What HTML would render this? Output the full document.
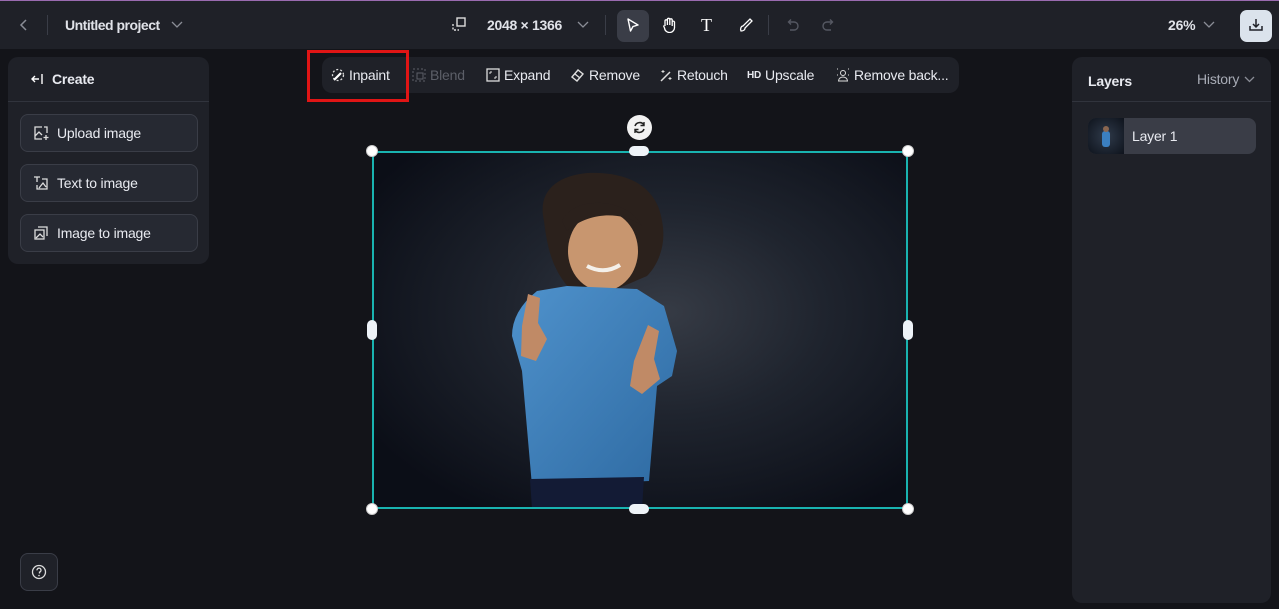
<!DOCTYPE html>
<html><head><meta charset="utf-8"><style>
*{box-sizing:border-box;margin:0;padding:0}
body{width:1279px;height:609px;background:#131419;font-family:"Liberation Sans",sans-serif;color:#e8eaf0;position:relative;overflow:hidden;font-size:14px;letter-spacing:-0.2px}
.top{position:absolute;left:0;top:0;width:1279px;height:49px;background:#1f2128;border-top:1px solid #9a6bb0}
.abs{position:absolute}
.panel{position:absolute;background:#1f2128;border-radius:10px}
.btn{position:absolute;left:12px;width:178px;height:38px;border:1px solid #3a3d47;border-radius:8px;background:#262932;display:flex;align-items:center;padding-left:12px;gap:8px;font-size:14px}
.tool{display:flex;align-items:center;gap:4px;font-size:14px;color:#e8eaf0}
svg{display:block}
</style></head><body>
<div class="top">
 <svg class="abs" style="left:18px;top:17px" width="12" height="14" viewBox="0 0 12 14"><path d="M8 2 L3 7 L8 12" stroke="#8a8d96" stroke-width="1.5" fill="none"/></svg>
 <div class="abs" style="left:47px;top:14px;width:1px;height:20px;background:#3a3d47"></div>
 <div class="abs" style="left:65px;top:16px;font-size:14px;font-weight:bold;color:#e0e2e8;letter-spacing:-0.5px">Untitled project</div>
 <svg class="abs" style="left:171px;top:19px" width="12" height="10"><path d="M1 2 L6 7 L11 2" stroke="#8a8d96" stroke-width="1.3" fill="none"/></svg>
 <svg class="abs" style="left:452px;top:16px" width="14" height="14"><rect x="5" y="1" width="8" height="8" stroke="#ddd" fill="none" stroke-width="1.4"/><path d="M1 7 V13 H7" stroke="#ddd" fill="none" stroke-dasharray="2 1.5" stroke-width="1.4"/></svg>
 <div class="abs" style="left:487px;top:16px;font-weight:bold;color:#e0e2e8;letter-spacing:-0.3px">2048 × 1366</div>
 <svg class="abs" style="left:577px;top:19px" width="12" height="10"><path d="M1 2 L6 7 L11 2" stroke="#8a8d96" stroke-width="1.3" fill="none"/></svg>
 <div class="abs" style="left:605px;top:14px;width:1px;height:20px;background:#3a3d47"></div>
 <div class="abs" style="left:617px;top:9px;width:32px;height:32px;border-radius:7px;background:#3a3d47"></div>
 <svg class="abs" style="left:626px;top:17px" width="14" height="15"><path d="M2 1 L12 7 L7 8.5 L4.5 13 Z" stroke="#fff" fill="none" stroke-width="1.4" stroke-linejoin="round"/></svg>
 <svg class="abs" style="left:662px;top:16px" width="14" height="16"><path d="M3 9 V4 a1.2 1.2 0 0 1 2.4 0 V8 V2.5 a1.2 1.2 0 0 1 2.4 0 V8 V3 a1.2 1.2 0 0 1 2.4 0 V9 V5 a1.2 1.2 0 0 1 2.3 0 V10 a5 5 0 0 1 -10 1 L1.5 8.5" stroke="#fff" fill="none" stroke-width="1.3"/></svg>
 <div class="abs" style="left:701px;top:14px;font-family:'Liberation Serif',serif;font-size:18px;color:#fff">T</div>
 <svg class="abs" style="left:738px;top:16px" width="16" height="16"><path d="M3 14 C2 12 3 9 5 9 L12 2 L14 4 L7 11 C7 13 5 14 3 14Z" stroke="#fff" fill="none" stroke-width="1.3"/></svg>
 <div class="abs" style="left:768px;top:14px;width:1px;height:20px;background:#3a3d47"></div>
 <svg class="abs" style="left:786px;top:17px" width="14" height="14"><path d="M3 4 H8 a4 4 0 0 1 0 8 H4 M5 1.5 L2.5 4 L5 6.5" stroke="#555862" fill="none" stroke-width="1.4"/></svg>
 <svg class="abs" style="left:821px;top:17px" width="14" height="14"><path d="M11 4 H6 a4 4 0 0 0 0 8 H10 M9 1.5 L11.5 4 L9 6.5" stroke="#555862" fill="none" stroke-width="1.4"/></svg>
 <div class="abs" style="left:1168px;top:16px;font-weight:bold;color:#e0e2e8">26%</div>
 <svg class="abs" style="left:1203px;top:19px" width="12" height="10"><path d="M1 2 L6 7 L11 2" stroke="#8a8d96" stroke-width="1.3" fill="none"/></svg>
 <div class="abs" style="left:1240px;top:9px;width:32px;height:32px;border-radius:7px;background:#dbe3ec"></div>
 <svg class="abs" style="left:1248px;top:16px" width="16" height="16"><path d="M8 2 V10 M5 7 L8 10 L11 7 M2 9 V13 H14 V9" stroke="#1f2128" fill="none" stroke-width="1.5"/></svg>
</div>

<div class="panel" style="left:8px;top:57px;width:201px;height:207px">
 <svg class="abs" style="left:22px;top:15px" width="14" height="14"><path d="M9 7 H2 M5 4 L2 7 L5 10 M12 2 V12" stroke="#fff" fill="none" stroke-width="1.4"/></svg>
 <div class="abs" style="left:44px;top:14px;font-weight:bold;font-size:14px">Create</div>
 <div class="abs" style="left:0;top:44px;width:201px;height:1px;background:#31343d"></div>
 <div class="btn" style="top:57px"><svg width="16" height="16"><path d="M9 2 H2 V14 H9 M2 11 L6 7 L9 10 M11 2 H14 V8" stroke="#ddd" fill="none" stroke-width="1.3"/><path d="M13 10 V15 M10.5 12.5 H15.5" stroke="#ddd" stroke-width="1.3"/></svg>Upload image</div>
 <div class="btn" style="top:107px"><svg width="16" height="16"><path d="M1 2 H7 M4 2 V7 M9 4 H14 V14 H4 V10 M6 13 L10 8 L13 12" stroke="#ddd" fill="none" stroke-width="1.3"/></svg>Text to image</div>
 <div class="btn" style="top:157px"><svg width="16" height="16"><rect x="2" y="5" width="9" height="9" stroke="#ddd" fill="none" stroke-width="1.3"/><path d="M5 2 H14 V11 M3 13 L7 9 L10 12" stroke="#ddd" fill="none" stroke-width="1.3"/></svg>Image to image</div>
</div>

<div class="abs" style="left:20px;top:553px;width:38px;height:38px;border:1px solid #3a3d47;border-radius:8px;background:#1f2128"></div>
<svg class="abs" style="left:31px;top:564px" width="16" height="16"><circle cx="8" cy="8" r="6.5" stroke="#ddd" fill="none" stroke-width="1.3"/><path d="M6 6.3 a2 2 0 1 1 2.5 1.8 V9.5" stroke="#ddd" fill="none" stroke-width="1.3"/><circle cx="8" cy="11.5" r=".8" fill="#ddd"/></svg>

<div class="panel" style="left:322px;top:57px;width:637px;height:36px"></div>
<div class="abs" style="left:307px;top:50px;width:102px;height:52px;border:3px solid #e01515"></div>
<div class="abs tool" style="left:331px;top:67px"><svg width="14" height="14"><circle cx="7" cy="7" r="5.5" stroke="#ddd" fill="none" stroke-dasharray="2 2" stroke-width="1.3"/><path d="M3 12 L10 5" stroke="#fff" stroke-width="2.2"/></svg>Inpaint</div>
<div class="abs tool" style="left:412px;top:67px;color:#5c5f68"><svg width="14" height="14"><rect x="1" y="1" width="12" height="12" stroke="#5c5f68" fill="none" stroke-dasharray="2 2"/><rect x="5" y="5" width="6" height="6" stroke="#5c5f68" fill="none"/></svg>Blend</div>
<div class="abs tool" style="left:486px;top:67px"><svg width="14" height="14"><rect x="1" y="1" width="12" height="12" stroke="#ddd" fill="none" stroke-width="1.3"/><path d="M4 4 h2 M4 4 v2 M10 10 h-2 M10 10 v-2" stroke="#ddd"/></svg>Expand</div>
<div class="abs tool" style="left:570px;top:67px"><svg width="15" height="14"><path d="M2 9 L8 2 L13 6 L7 13 Z M5 6 L10 10" stroke="#ddd" fill="none" stroke-width="1.4"/></svg>Remove</div>
<div class="abs tool" style="left:659px;top:67px"><svg width="14" height="14"><path d="M2 13 L11 4" stroke="#ddd" stroke-width="1.5"/><path d="M4 2 v3 M2.5 3.5 h3 M11 9 v3 M9.5 10.5 h3" stroke="#ddd"/></svg>Retouch</div>
<div class="abs tool" style="left:747px;top:67px"><span style="font-size:10px;font-weight:bold">HD</span>Upscale</div>
<div class="abs tool" style="left:836px;top:67px"><svg width="14" height="14"><circle cx="7" cy="5" r="2.5" stroke="#ddd" fill="none"/><path d="M2.5 13 a4.5 4 0 0 1 9 0Z" stroke="#ddd" fill="none"/><path d="M1 1h1M12 1h1M1 7h1M12 7h1" stroke="#ddd"/></svg>Remove back...</div>

<!-- image -->
<svg class="abs" style="left:372px;top:151px" width="536" height="358" viewBox="0 0 536 358">
 <defs>
  <radialGradient id="bg" cx="0.55" cy="0.45" r="0.65"><stop offset="0" stop-color="#363b45"/><stop offset="0.45" stop-color="#1f242e"/><stop offset="1" stop-color="#0b0e17"/></radialGradient>
  <linearGradient id="sh" x1="0" y1="0" x2="1" y2="1"><stop offset="0" stop-color="#4f92cc"/><stop offset="1" stop-color="#2e6aa2"/></linearGradient>
 </defs>
 <rect width="536" height="358" fill="url(#bg)"/>
 <path d="M172 70 C165 40 185 25 215 22 C255 20 285 35 290 70 C295 95 285 115 275 125 L240 140 L200 140 C180 120 175 95 172 70Z" fill="#2b211c"/>
 <ellipse cx="231" cy="100" rx="35" ry="40" fill="#c8966f"/>
 <path d="M190 70 C200 45 255 45 270 75 C255 62 220 58 195 80Z" fill="#2b211c"/>
 <path d="M215 115 Q232 124 248 114" stroke="#f4f0ea" stroke-width="4" fill="none"/>
 <path d="M195 135 L265 138 L292 155 L305 200 L300 225 L285 235 L277 330 L160 335 L150 220 L140 185 Q140 160 165 140 Z" fill="url(#sh)"/>
 <path d="M150 175 L156 143 L168 147 L166 172 L175 188 L164 210 L149 205Z" fill="#c08a66"/>
 <path d="M262 210 L276 174 L287 180 L282 208 L288 228 L270 243 L258 235Z" fill="#c08a66"/>
 <path d="M158 328 L272 326 L270 358 L160 358Z" fill="#131b35"/>
</svg>
<div class="abs" style="left:372px;top:151px;width:536px;height:358px;border:2px solid #19b3b0"></div>
<div class="abs" style="left:366px;top:145px;width:12px;height:12px;border-radius:50%;background:#fff;border:1px solid #ccc"></div>
<div class="abs" style="left:902px;top:145px;width:12px;height:12px;border-radius:50%;background:#fff;border:1px solid #ccc"></div>
<div class="abs" style="left:366px;top:503px;width:12px;height:12px;border-radius:50%;background:#fff;border:1px solid #ccc"></div>
<div class="abs" style="left:902px;top:503px;width:12px;height:12px;border-radius:50%;background:#fff;border:1px solid #ccc"></div>
<div class="abs" style="left:629px;top:146px;width:20px;height:10px;border-radius:5px;background:#eef3f8"></div>
<div class="abs" style="left:629px;top:504px;width:20px;height:10px;border-radius:5px;background:#eef3f8"></div>
<div class="abs" style="left:367px;top:320px;width:10px;height:20px;border-radius:5px;background:#eef3f8"></div>
<div class="abs" style="left:903px;top:320px;width:10px;height:20px;border-radius:5px;background:#eef3f8"></div>
<div class="abs" style="left:627px;top:115px;width:25px;height:25px;border-radius:50%;background:#f2f2f2"></div>
<svg class="abs" style="left:632px;top:120px" width="15" height="15"><path d="M3 6 a5 5 0 0 1 9 -1 M12 9 a5 5 0 0 1 -9 1" stroke="#222" fill="none" stroke-width="1.6"/><path d="M12 2 v3.5 h-3.5 M3 13 v-3.5 h3.5" stroke="#222" fill="none" stroke-width="1.4"/></svg>

<div class="panel" style="left:1072px;top:57px;width:199px;height:546px">
 <div class="abs" style="left:16px;top:16px;font-weight:bold">Layers</div>
 <div class="abs" style="left:125px;top:14px;color:#a8acb6">History</div>
 <svg class="abs" style="left:172px;top:18px" width="11" height="9"><path d="M1 2 L5.5 6.5 L10 2" stroke="#8a8d96" stroke-width="1.3" fill="none"/></svg>
 <div class="abs" style="left:0;top:44px;width:199px;height:1px;background:#31343d"></div>
 <div class="abs" style="left:16px;top:61px;width:168px;height:36px;border-radius:8px;background:#3a3d47"></div>
 <div class="abs" style="left:16px;top:61px;width:36px;height:36px;border-radius:8px 0 0 8px;background:radial-gradient(circle at 50% 50%,#2f3a4a,#0e131c);overflow:hidden">
  <div class="abs" style="left:14px;top:13px;width:8px;height:16px;background:#3b7fc0;border-radius:3px"></div>
  <div class="abs" style="left:15px;top:8px;width:6px;height:6px;background:#8a6650;border-radius:50%"></div>
 </div>
 <div class="abs" style="left:60px;top:71px;font-size:14px">Layer 1</div>
</div>
</body></html>
